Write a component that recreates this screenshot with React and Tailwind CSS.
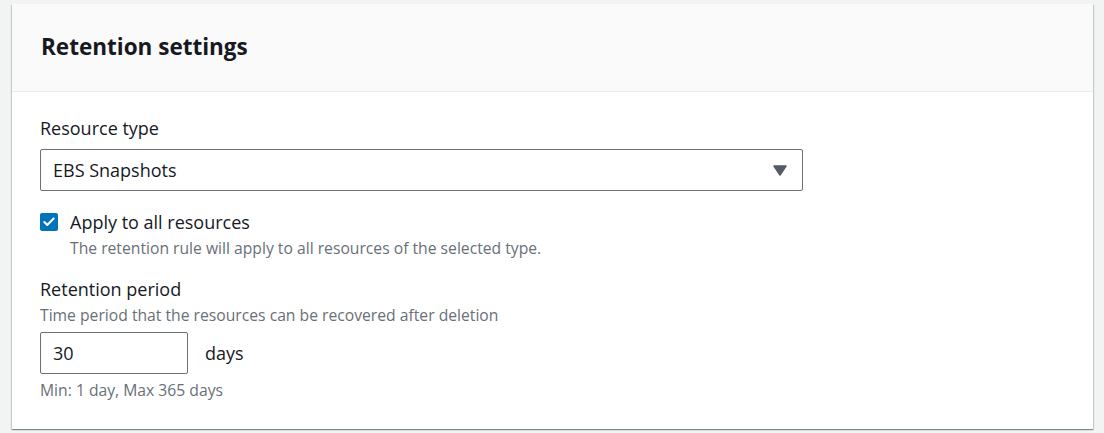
import { Check } from "lucide-react";

export default function App() {
  return (
    <div
      className="min-h-[433px] bg-[#f2f3f3] pl-[12px] pr-[11px] pt-[4px] text-[#16191f]"
      style={{ fontFamily: '"Open Sans", "Noto Sans", Arial, sans-serif' }}
    >
      <div className="bg-white shadow-[0_1px_1px_0_rgba(0,28,36,0.3),1px_1px_1px_0_rgba(0,28,36,0.15),-1px_1px_1px_0_rgba(0,28,36,0.15)]">
        {/* Header */}
        <div className="flex h-[88px] items-center border-b border-[#eaeded] bg-[#fafafa] px-[29px]">
          <h2 className="text-[22.5px] font-bold leading-none">Retention settings</h2>
        </div>

        {/* Body */}
        <div className="px-[28px] pt-[25px] pb-[29px]">
          <div className="text-[18px] leading-[22px]">Resource type</div>
          <div className="mt-[10px] flex h-[42px] w-[763px] items-center justify-between rounded-[2px] border border-[#687078] pl-[12px] pr-[15px]">
            <span className="text-[18px]">EBS Snapshots</span>
            <svg width="14" height="11" viewBox="0 0 14 11">
              <path d="M1 1h12L7 10z" fill="#545b64" stroke="#545b64" strokeWidth="1.5" strokeLinejoin="round" />
            </svg>
          </div>

          <div className="mt-[20px] flex gap-[12px]">
            <div className="mt-[2px] flex h-[18px] w-[18px] items-center justify-center rounded-[2px] bg-[#0073bb]">
              <Check size={14} strokeWidth={3.5} color="white" />
            </div>
            <div>
              <div className="text-[18px] leading-[22px]">Apply to all resources</div>
              <div className="mt-[5px] text-[15.7px] leading-[20px] text-[#687078]">
                The retention rule will apply to all resources of the selected type.
              </div>
            </div>
          </div>

          <div className="mt-[20px] text-[18px] leading-[22px]">Retention period</div>
          <div className="mt-[5px] text-[15.7px] leading-[20px] text-[#687078]">
            Time period that the resources can be recovered after deletion
          </div>
          <div className="mt-[7px] flex items-center gap-[17px]">
            <div className="flex h-[42px] w-[148px] items-center rounded-[2px] border border-[#687078] px-[12px] text-[18px]">
              30
            </div>
            <span className="text-[18px]">days</span>
          </div>
          <div className="mt-[6px] text-[15.7px] leading-[20px] text-[#687078]">Min: 1 day, Max 365 days</div>
        </div>
      </div>
    </div>
  );
}
